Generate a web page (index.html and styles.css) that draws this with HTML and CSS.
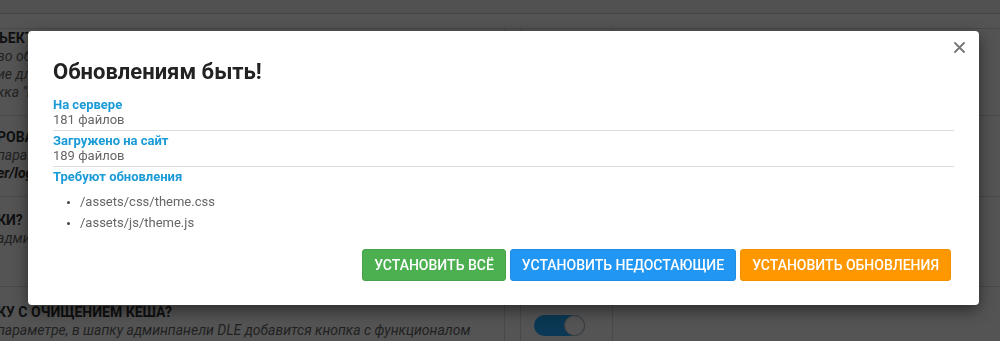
FILE: index.html
```html
<!DOCTYPE html>
<html lang="ru">
<head>
  <meta charset="UTF-8" />
  <meta name="viewport" content="width=device-width, initial-scale=1.0"/>
  <title>Обновления</title>
  <link rel="stylesheet" href="styles.css">
</head>
<body>

  <div class="page">
    <div class="topbar"></div>

    <div class="settings">
      <div class="opt opt-first">
        <div class="opt-text">
          <div class="opt-title">ЪЕКТОВ НА СТРАНИЦЕ</div>
          <div class="opt-desc">во объектов, выводимых на одной странице</div>
          <div class="opt-desc">ие для вывода всех объектов</div>
          <div class="opt-desc">кка "Показать ещё"</div>
        </div>
        <div class="opt-gap"></div>
        <div class="opt-ctrl"></div>
        <div class="opt-rest"></div>
      </div>

      <div class="opt opt-second">
        <div class="opt-text">
          <div class="opt-title">РОВАТЬ ОШИБКИ</div>
          <div class="opt-desc">параметре ошибки будут записываться в файл</div>
          <div class="opt-desc opt-path">er/logs/errors.log</div>
        </div>
        <div class="opt-gap"></div>
        <div class="opt-ctrl"></div>
        <div class="opt-rest"></div>
      </div>

      <div class="opt opt-third">
        <div class="opt-text">
          <div class="opt-title">КИ?</div>
          <div class="opt-desc">админпанели появятся подсказки</div>
        </div>
        <div class="opt-gap"></div>
        <div class="opt-ctrl"></div>
        <div class="opt-rest"></div>
      </div>

      <div class="opt opt-fourth">
        <div class="opt-text">
          <div class="opt-title">КУ С ОЧИЩЕНИЕМ КЕША?</div>
          <div class="opt-desc">параметре, в шапку админпанели DLE добавится кнопка с функционалом</div>
        </div>
        <div class="opt-gap"></div>
        <div class="opt-ctrl">
          <span class="toggle"><span class="toggle-knob"></span></span>
        </div>
        <div class="opt-rest"></div>
      </div>
    </div>
  </div>

  <div class="overlay"></div>

  <div class="modal">
    <button class="modal-close" aria-label="Закрыть">
      <svg width="11" height="11" viewBox="0 0 11 11">
        <path d="M1 1 L10 10 M10 1 L1 10" stroke="#777" stroke-width="1.8" stroke-linecap="round" fill="none"/>
      </svg>
    </button>

    <h2 class="modal-title">Обновлениям быть!</h2>

    <div class="info-item">
      <div class="info-label">На сервере</div>
      <div class="info-value">181 файлов</div>
    </div>
    <div class="info-item">
      <div class="info-label">Загружено на сайт</div>
      <div class="info-value">189 файлов</div>
    </div>
    <div class="info-item info-last">
      <div class="info-label">Требуют обновления</div>
      <ul class="file-list">
        <li>/assets/css/theme.css</li>
        <li>/assets/js/theme.js</li>
      </ul>
    </div>

    <div class="modal-actions">
      <button class="btn btn-green">Установить всё</button>
      <button class="btn btn-blue">Установить недостающие</button>
      <button class="btn btn-orange">Установить обновления</button>
    </div>
  </div>

</body>
</html>
```

FILE: styles.css
```css
body {
  font-family: Roboto, 'Noto Sans', sans-serif;
  margin: 0;
  background-color: #fff;
  color: #333;
  overflow: hidden;
}

/* page behind the dialog */
.topbar {
  height: 13px;
  background-color: #f4f4f4;
  border-bottom: 1px solid #cfcfcf;
}

.settings {
  margin-top: 14px;
  border-top: 1px solid #ddd;
  display: grid;
  grid-template-rows: 87px 81px 90px 60px;
}

.opt {
  display: grid;
  grid-template-columns: 504px 16px 92px 1fr;
  border-bottom: 1px solid #ddd;
}

.opt-text {
  padding-top: 12px;
  margin-left: -3px;
  white-space: nowrap;
  overflow: hidden;
}

.opt-first .opt-text {
  padding-top: 0;
}

.opt-third .opt-text {
  padding-top: 14px;
}

.opt-fourth .opt-text {
  padding-top: 16px;
}

.opt-title {
  font-size: 14px;
  font-weight: bold;
  line-height: 18px;
  color: #333;
  text-transform: uppercase;
}

.opt-desc {
  font-size: 14px;
  font-style: italic;
  line-height: 18px;
  color: #666;
}

.opt-path {
  font-weight: bold;
  color: #333;
}

.opt-gap,
.opt-ctrl,
.opt-rest {
  border-left: 1px solid #ddd;
}

.opt-ctrl {
  padding: 28px 0 0 13px;
}

.toggle {
  display: block;
  width: 51px;
  height: 21px;
  border-radius: 11px;
  background-color: #22abff;
  position: relative;
}

.toggle-knob {
  position: absolute;
  right: 0;
  top: 0;
  width: 19px;
  height: 19px;
  border-radius: 50%;
  background-color: #fff;
  border: 1px solid #bbb;
}

.overlay {
  position: fixed;
  top: 0;
  left: 0;
  right: 0;
  bottom: 0;
  background-color: rgba(0, 0, 0, 0.67);
}

/* dialog */
.modal {
  position: fixed;
  left: 28px;
  top: 31px;
  width: 951px;
  box-sizing: border-box;
  padding: 27px 25px 24px;
  background-color: #fff;
  border-radius: 4px;
  box-shadow: 0 5px 15px rgba(0, 0, 0, 0.5);
}

.modal-close {
  position: absolute;
  top: 11px;
  right: 14px;
  padding: 0;
  border: none;
  background: none;
  cursor: pointer;
  display: flex;
}

.modal-title {
  margin: 0 0 10px;
  font-size: 22px;
  line-height: 27px;
  font-weight: bold;
  color: #222;
}

.info-item {
  padding: 2px 0 3px;
  border-bottom: 1px solid #ddd;
  font-size: 13px;
  line-height: 15px;
}

.info-last {
  border-bottom: none;
  padding-bottom: 0;
}

.info-label {
  font-weight: bold;
  color: #1a9ad6;
}

.info-value {
  color: #666;
}

.file-list {
  margin: 7px 0 16px;
  padding-left: 27px;
  color: #666;
  line-height: 21px;
}

.file-list li::marker {
  font-size: 10px;
  color: #444;
}

.modal-actions {
  display: flex;
  justify-content: flex-end;
  gap: 4px;
  margin-right: 3px;
}

.btn {
  height: 32px;
  padding: 0 11px;
  border: 1px solid transparent;
  border-radius: 3px;
  color: #fff;
  font-family: Roboto, 'Noto Sans', sans-serif;
  font-size: 14px;
  font-weight: 500;
  text-transform: uppercase;
  cursor: pointer;
}

.btn-green {
  background-color: #4caf50;
  border-color: #46a34a;
}

.btn-blue {
  background-color: #2196f3;
  border-color: #1e8ce3;
}

.btn-orange {
  background-color: #ff9800;
  border-color: #f08f00;
}
```
